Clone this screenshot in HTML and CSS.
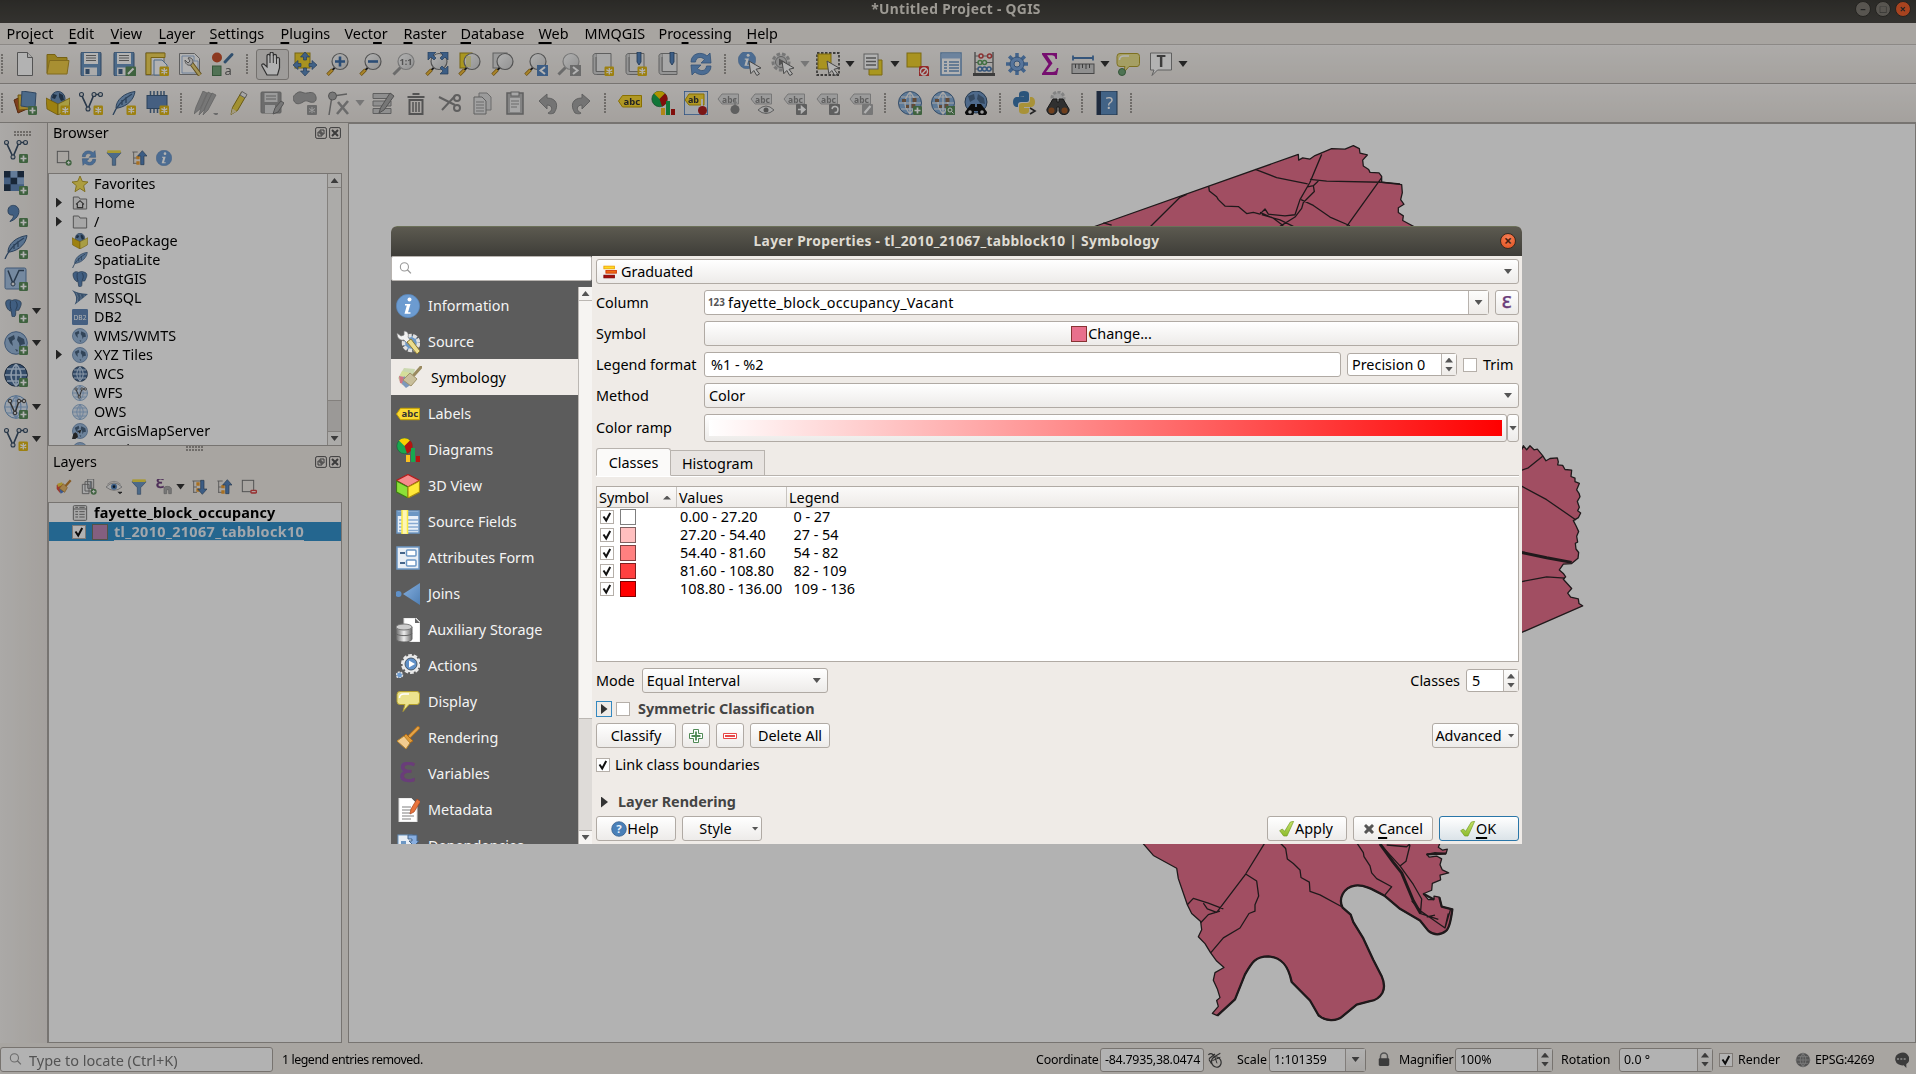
FILE: index.html
```html
<!DOCTYPE html>
<html lang="en">
<head>
<meta charset="utf-8">
<title>*Untitled Project - QGIS</title>
<link rel="stylesheet" href="styles.css">
</head>
<body>
<svg class="defs" width="0" height="0" aria-hidden="true">
<defs>
<linearGradient id="gBlue" x1="0" y1="0" x2="1" y2="1"><stop offset="0" stop-color="#86b0e0"/><stop offset="1" stop-color="#4f7fb4"/></linearGradient>
<linearGradient id="gGlass" x1="0" y1="0" x2="1" y2="1"><stop offset="0" stop-color="#fff"/><stop offset="1" stop-color="#cfcfcf"/></linearGradient>
<linearGradient id="gMetal"><stop offset="0" stop-color="#666"/><stop offset=".5" stop-color="#eee"/><stop offset="1" stop-color="#666"/></linearGradient>
<linearGradient id="gCheck" x1="0" y1="0" x2="0" y2="1"><stop offset="0" stop-color="#c5e36a"/><stop offset="1" stop-color="#8dbb2c"/></linearGradient>
</defs>
</svg>
<svg class="sprites" width="0" height="0" aria-hidden="true">
<symbol id="plus" viewBox="0 0 24 24"><rect x="15" y="15" width="9" height="9" rx="1.2" fill="#5a8c5a"/><path d="M19.5 16.5v6M16.500 19.500h6" stroke="#fff" stroke-width="1.700"/></symbol>
<symbol id="star" viewBox="0 0 24 24"><rect x="14.500" y="14.500" width="9.500" height="9.500" rx="1.200" fill="#e0b818"/><path d="M19.300 16v6.600M16.400 17.600l5.800 3.400M22.200 17.600l-5.800 3.400" stroke="#fff" stroke-width="1.300"/></symbol>
<symbol id="lens" viewBox="0 0 24 24"><path d="M3 21.500l7-7" stroke="#222" stroke-width="1.800"/><path d="M1.500 22.800l5-5" stroke="#94701c" stroke-width="3.400"/><path d="M1.800 22.500l4.500-4.500" stroke="#f2bd3c" stroke-width="2"/><circle cx="14" cy="9.500" r="8" fill="url(#gGlass)" stroke="#777" stroke-width="1.200"/></symbol>
<symbol id="lensg" viewBox="0 0 24 24"><path d="M1.500 22.500l7-7" stroke="#999" stroke-width="3"/><circle cx="14" cy="9.500" r="8" fill="url(#gGlass)" stroke="#aaa" stroke-width="1.200"/></symbol>
<symbol id="cursor" viewBox="0 0 24 24"><path d="M11 9l12 7-5 1.300 3.500 4.700-2.700 1.500-3-5-3 3.200z" fill="#fff" stroke="#666" stroke-width="1"/></symbol>
<symbol id="newdoc" viewBox="0 0 24 24"><path d="M4.500 .5h10l5 5v18h-15z" fill="#fff" stroke="#777"/><path d="M14.500 .5v5h5" fill="#eee" stroke="#777"/></symbol>
<symbol id="folder" viewBox="0 0 24 24"><path d="M1 21V2.500h8l2 3h10V9" fill="#d8b72c" stroke="#a88a1c"/><path d="M1 22L3.500 8.500H23L21 22z" fill="#f0cc48" stroke="#b8982a"/></symbol>
<symbol id="save" viewBox="0 0 24 24"><rect x="2" y="0" width="20" height="24" rx="1.500" fill="#6c97c4" stroke="#45658a"/><rect x="5" y="1" width="14" height="11" fill="#fff"/><path d="M7 3.500h10M7 6h10M7 8.500h10" stroke="#777"/><rect x="5" y="15.500" width="13" height="8" fill="#f4f4f4"/><rect x="6.500" y="17" width="4" height="5" fill="#45658a"/></symbol>
<symbol id="saveas" viewBox="0 0 24 24"><use href="#save"/><rect x="13.500" y="14.500" width="10.500" height="10" rx="1" fill="#5a8c5a"/><path d="M16 22l5.500-5.500" stroke="#fff" stroke-width="2"/></symbol>
<symbol id="layout" viewBox="0 0 24 24"><rect x="1" y="1" width="18" height="22" fill="#fff" stroke="#888"/><path d="M1 1h19v4.500H6v17H1z" fill="#f3d65a" stroke="#ab8d1c"/><path d="M9 8h8l5 5v10H9z" fill="#fff" stroke="#6b93c0"/><use href="#star"/></symbol>
<symbol id="layouts" viewBox="0 0 24 24"><path d="M1.500 1.500h15l5 5v16h-20z" fill="#fff" stroke="#888"/><path d="M4 4h12v5h4v12H4z" fill="none" stroke="#9bb8dc"/><path d="M13 11l9 12" stroke="#8c7026" stroke-width="4.500"/><path d="M13 11l9 12" stroke="#e9d37a" stroke-width="2.600"/><path d="M7 8c0 4 3 6 6 5l2-3c0-3-2-5-5-4l2 3-2 2z" fill="#e8e8e8" stroke="#777"/></symbol>
<symbol id="styles" viewBox="0 0 24 24"><circle cx="6" cy="5.500" r="5" fill="#c8502c"/><path d="M14 10l7-7.500" stroke="#45709c" stroke-width="3" stroke-linecap="round"/><rect x="1.500" y="14" width="8.500" height="9.500" fill="#74a37a" stroke="#4c7a52"/><text x="13.500" y="23" font-size="13" fill="#666">a</text></symbol>
<symbol id="hand" viewBox="0 0 24 24"><path d="M7 23L2 14c-1-2 1.500-3 2.500-1.300L7 15V4c0-2.300 3-2.300 3 0V2c0-2.400 3.300-2.400 3.300 0v2c0-2.300 3.200-2.300 3.200 0v3c0-2 3-2 3 0v9l-2 7z" fill="#fff" stroke="#444" stroke-width="1.200"/><path d="M10 4v7M13.300 4v7M16.500 6v6" stroke="#444"/></symbol>
<symbol id="panto" viewBox="0 0 24 24"><rect x="2" y="1" width="15" height="15" fill="#f2d22e" stroke="#a8901a"/><path d="M12 0l4.500 5h-3v3h-3V5h-3zM12 24l-4.500-5h3v-3h3v3h3zM0 13l5-4.500v3h3v3H5v3zM24 13l-5-4.500v3h-3v3h3v3z" fill="#5c8ac0" stroke="#35577f" stroke-width=".7"/></symbol>
<symbol id="zin" viewBox="0 0 24 24"><use href="#lens"/><path d="M14 4.500v10M9 9.500h10" stroke="#3e6ea8" stroke-width="2.600"/></symbol>
<symbol id="zout" viewBox="0 0 24 24"><use href="#lens"/><path d="M9 9.500h10" stroke="#3e6ea8" stroke-width="2.600"/></symbol>
<symbol id="znat" viewBox="0 0 24 24"><use href="#lensg"/><text x="14" y="13" font-size="9" font-weight="700" text-anchor="middle" fill="#777">1:1</text></symbol>
<symbol id="zfull" viewBox="0 0 24 24"><use href="#lens"/><path d="M3 0h8L8 3l3 3-2 2-3-3-3 3zM23 0v8l-3-3-3 3-2-2 3-3-3-3zM23 22h-8l3-3-3-3 2-2 3 3 3-3z" fill="#5585be" stroke="#35577f" stroke-width=".7"/></symbol>
<symbol id="zsel" viewBox="0 0 24 24"><rect x="2" y="1" width="12" height="15" fill="#f2d82e" stroke="#a8901a"/><use href="#lens"/><path d="M10.500 4v11" stroke="#e7dc5a" stroke-width="5" opacity=".5"/></symbol>
<symbol id="zlay" viewBox="0 0 24 24"><rect x="2" y="1" width="14" height="15" fill="#ddd" stroke="#888"/><use href="#lens"/></symbol>
<symbol id="zlast" viewBox="0 0 24 24"><use href="#lens"/><rect x="13" y="13" width="11" height="11" fill="#5585be"/><path d="M21 15l-4.500 3.500L21 22" fill="none" stroke="#fff" stroke-width="2"/></symbol>
<symbol id="znext" viewBox="0 0 24 24"><use href="#lensg"/><rect x="13" y="13" width="11" height="11" fill="#999"/><path d="M16 15l4.500 3.500L16 22" fill="none" stroke="#fff" stroke-width="2"/></symbol>
<symbol id="book" viewBox="0 0 24 24"><path d="M6 1.500h15v18H6z" fill="#eee" stroke="#888"/><path d="M6 1.500c-4 0-3 4-3 4v14c0 3 2 3 4 3h14v-3H6V5" fill="#d5d5d5" stroke="#888"/></symbol>
<symbol id="mapnew" viewBox="0 0 24 24"><use href="#book"/><use href="#star"/></symbol>
<symbol id="mark" viewBox="0 0 24 24"><use href="#book"/><path d="M14 0h4v10l-2 3-2-3z" fill="#5585be" stroke="#2c4c72" stroke-width=".8"/></symbol>
<symbol id="marknew" viewBox="0 0 24 24"><use href="#mark"/><use href="#star"/></symbol>
<symbol id="refresh" viewBox="0 0 24 24"><path d="M2 10C2 1 13-1 18 4l3-3 1 10h-10l3.500-3.500C12 4 7 5 6.500 10z" fill="#6b9bd2" stroke="#4a75a8" stroke-width=".8"/><path d="M22 14c0 9-11 11-16 6l-3 3-1-10h10l-3.500 3.500C12 20 17 19 17.500 14z" fill="#6b9bd2" stroke="#4a75a8" stroke-width=".8"/></symbol>
<symbol id="info" viewBox="0 0 24 24"><circle cx="12" cy="12" r="11.700" fill="#6c9bd0" stroke="#547fb2" stroke-width=".6"/><circle cx="13.500" cy="5.500" r="2" fill="#fff"/><path d="M9 10h5.500l-2.500 8.300h2.500v1.500H8.500l2.300-8.300H9z" fill="#fff"/></symbol>
<symbol id="ident" viewBox="0 0 24 24"><svg x="0" y="-1" width="18" height="18"><use href="#info"/></svg><use href="#cursor"/></symbol>
<symbol id="gearg" viewBox="0 0 24 24"><circle cx="10" cy="10" r="8" fill="#ddd" stroke="#aaa" stroke-width="3" stroke-dasharray="3.500 2"/><circle cx="10" cy="10" r="5.500" fill="#ccc" stroke="#888"/><path d="M8 6.500l6 3.500-6 3.500z" fill="#777"/><use href="#cursor"/></symbol>
<symbol id="select" viewBox="0 0 24 24"><rect x="1" y="1" width="22" height="22" fill="none" stroke="#222" stroke-width="1.300" stroke-dasharray="2.500 1.500"/><rect x="2" y="2" width="13" height="15" fill="#f2d22e" stroke="#b09618"/><use href="#cursor"/></symbol>
<symbol id="selform" viewBox="0 0 24 24"><path d="M8 8h13v15H8z" fill="#f2d82e" stroke="#b09618"/><rect x="3" y="2" width="14" height="15" fill="#fff" stroke="#888"/><path d="M5 6h10M5 9.500h10M5 13h10" stroke="#777" stroke-width="1.300"/></symbol>
<symbol id="desel" viewBox="0 0 24 24"><rect x="1" y="1" width="14" height="14" fill="#f2d22e" stroke="#b09618"/><rect x="13" y="14" width="10" height="11" rx="1.500" fill="#d23a3a"/><circle cx="18" cy="19.500" r="3.500" fill="#d23a3a" stroke="#fff" stroke-width="1.400"/><path d="M16 22l4.500-5" stroke="#fff" stroke-width="1.400"/></symbol>
<symbol id="table" viewBox="0 0 24 24"><rect x="2" y="1" width="20" height="22" fill="#fff" stroke="#6c97c4" stroke-width="1.500"/><path d="M2.500 4h19" stroke="#9abbe2" stroke-width="5"/><path d="M5 10h3M5 13h3M5 16h3M5 19h3M10 10h10M10 13h10M10 16h10M10 19h10" stroke="#6c97c4" stroke-width="1.300"/></symbol>
<symbol id="abacus" viewBox="0 0 24 24"><path d="M3 0v22M21 0v22" stroke="#777" stroke-width="1.500"/><path d="M1 22.500h22" stroke="#555" stroke-width="3"/><path d="M3 4h18M3 10.500h18M3 17h18" stroke="#777"/><g fill="#eee" stroke-width="1.500"><g stroke="#c84848"><circle cx="9" cy="4" r="2"/><circle cx="17.500" cy="4" r="2"/></g><g stroke="#5fa05f"><circle cx="8" cy="10.500" r="2"/><circle cx="12.500" cy="10.500" r="2"/></g><g stroke="#4c7ab0"><circle cx="8" cy="17" r="2"/><circle cx="12.500" cy="17" r="2"/><circle cx="17" cy="17" r="2"/></g></g></symbol>
<symbol id="gear" viewBox="0 0 24 24"><path d="M12 1v22M1 12h22M4.200 4.200l15.600 15.600M19.800 4.200L4.200 19.800" stroke="#5e8dc6" stroke-width="3.500"/><circle cx="12" cy="12" r="7" fill="#7ba6dc" stroke="#4a75a8"/><circle cx="12" cy="12" r="3" fill="#f0ebe6" stroke="#4a75a8"/></symbol>
<symbol id="sigma" viewBox="0 0 24 24"><path d="M4 1h15v6h-1.500C17 4 16 3.300 13 3.300H9l5.500 8L8 20h6c3 0 4-1 5-4h1.500L19 23H4v-1.500L10.500 12 4 2.500z" fill="#a8149e"/></symbol>
<symbol id="ruler" viewBox="0 0 24 24"><path d="M2 6h20M2 3.500v5M22 3.500v5" stroke="#4c7ab0" stroke-width="1.800"/><rect x="1" y="12" width="22" height="9.500" fill="#ccc" stroke="#666"/><path d="M4.500 12v4M8 12v5M11.500 12v4M15 12v5M18.500 12v4" stroke="#555"/></symbol>
<symbol id="tip" viewBox="0 0 24 24"><path d="M4 1.500h17q2.500 0 2.500 3v7q0 3-2.500 3h-8l-6 7 2-7H4q-3 0-3-3v-7q0-3 3-3z" fill="#ece38e" stroke="#b3a02e"/><path d="M3.500 8Q3.500 4 8 4h5" stroke="#fff" stroke-width="1.500" fill="none"/></symbol>
<symbol id="tipm" viewBox="0 0 24 24"><use href="#tip"/><circle cx="6" cy="20" r="3.500" fill="#6fa476" stroke="#4c7a52"/></symbol>
<symbol id="textan" viewBox="0 0 24 24"><path d="M1.500 1h21v17H8.500L3 23.500l2-5.500H1.500z" fill="#fff" stroke="#888"/><text x="12" y="15" font-family="Liberation Serif,serif" font-weight="700" font-size="16" text-anchor="middle" fill="#555">T</text></symbol>
<symbol id="dsm" viewBox="0 0 24 24"><path d="M1 9l9-4 4 13-9 4z" fill="#b55a28" stroke="#7c3a14"/><path d="M5 4l12 0 1 14-12 1z" fill="#e8c040" stroke="#9a7818"/><path d="M9 0l14 2-1 15-14-2z" fill="#6c97c4" stroke="#45658a"/><use href="#plus"/></symbol>
<symbol id="gpkg" viewBox="0 0 24 24"><circle cx="12" cy="7.500" r="7" fill="#6f94bd" stroke="#3f5e82"/><path d="M7 3l4 1-2 4-3-1zM13 2l4 2 1 5-3 1-2-4z" fill="#2c4460"/><path d="M0 7l12 6v11L1 18z" fill="#e0b818" stroke="#9a7c10" stroke-width=".8"/><path d="M24 7l-12 6v11l11-6z" fill="#f0e060" stroke="#9a7c10" stroke-width=".8"/></symbol>
<symbol id="gpkgn" viewBox="0 0 24 24"><use href="#gpkg"/><use href="#star"/></symbol>
<symbol id="vect" viewBox="0 0 24 24"><path d="M2.500 4l6.500 14L15 3.500h6" fill="none" stroke="#3a5068" stroke-width="1.700"/><g fill="#ddd" stroke="#3a5068" stroke-width="1.100"><circle cx="2.500" cy="3.500" r="2"/><circle cx="9" cy="18" r="2"/><circle cx="15" cy="3.500" r="2"/><circle cx="21.500" cy="3.500" r="2"/></g></symbol>
<symbol id="vectn" viewBox="0 0 24 24"><use href="#vect"/><use href="#star"/></symbol>
<symbol id="vectp" viewBox="0 0 24 24"><use href="#vect"/><use href="#plus"/></symbol>
<symbol id="feather" viewBox="0 0 24 24"><path d="M4 17C4 9 12 2 23 .5 22 8 16 15 6 17z" fill="#7ea3cc" stroke="#3f5e82"/><path d="M1 24C4 16 10 9 20 3M10 9v5M14 6v6" fill="none" stroke="#3f5e82" stroke-width="1.300"/></symbol>
<symbol id="feathn" viewBox="0 0 24 24"><use href="#feather"/><use href="#star"/></symbol>
<symbol id="feathp" viewBox="0 0 24 24"><use href="#feather"/><use href="#plus"/></symbol>
<symbol id="chip" viewBox="0 0 24 24"><path d="M5.500 0v22M9 0v22M12.500 0v22M16 0v22M19 0v22" stroke="#4c6c90" stroke-width="1.500"/><rect x="2" y="4.500" width="20" height="13" fill="#6288b8" stroke="#3f5e82"/><use href="#star"/></symbol>
<symbol id="pens" viewBox="0 0 24 24"><g fill="#aaa" stroke="#888" stroke-width=".7"><path d="M0 23l2-7L9 0l4 2-7 16z"/><path d="M5 24l2-7L14 1l4 2-8 16z"/><path d="M9 24l2-7L18 2l4 2-8 15z"/></g><path d="M19 22h6l-3 3z" fill="#999"/></symbol>
<symbol id="pen" viewBox="0 0 24 24"><path d="M4 23.500l1.500-7L14.500 1l5 3-9 15.500z" fill="#e8cf48" stroke="#94801c"/><path d="M13 4l5 3 2-3.500-5-3z" fill="#eee" stroke="#888"/><path d="M4 23.500l1.500-6 4 3z" fill="#e8dcb8"/></symbol>
<symbol id="saveg" viewBox="0 0 24 24"><rect x="1" y="1" width="20" height="21" rx="1" fill="#9a9a9a" stroke="#888"/><rect x="4.500" y="2" width="13" height="9" fill="#ddd"/><path d="M6 5h10M6 8h10" stroke="#888"/><rect x="5" y="14" width="10" height="8" fill="#ddd"/><path d="M13 23l2-6L21 10l3 2-6 9z" fill="#aaa" stroke="#777"/></symbol>
<symbol id="blob" viewBox="0 0 24 24"><path d="M4 2c4-3 6 1 10 0s8-1 9 4-3 6-6 5-4-2-7 0-7 3-9-1 0-6 3-8z" fill="#a5a5a5" stroke="#888"/><rect x="14" y="14" width="10" height="10" rx="1" fill="#999"/><path d="M19 16v6M16 17.500l6 3.500M22 17.500l-6 3.500" stroke="#ddd"/></symbol>
<symbol id="vtool" viewBox="0 0 24 24"><path d="M6 5L3 24M7 5l14-2" stroke="#888" stroke-width="1.500"/><circle cx="6.500" cy="5" r="4" fill="#aaa" stroke="#777"/><path d="M12 11l10 12M22 10L11 23" stroke="#999" stroke-width="2.600"/></symbol>
<symbol id="multi" viewBox="0 0 24 24"><path d="M2 2.500h18v5H2zM2 10h18v5H2zM2 17.500h18v5H2z" fill="#ccc" stroke="#888"/><path d="M8 22l1.500-5L19 2l4 3-10 14z" fill="#aaa" stroke="#777"/></symbol>
<symbol id="trash" viewBox="0 0 24 24"><path d="M3.500 6h17M8.500 3h7" stroke="#777" stroke-width="2.200"/><path d="M5.500 9h13v14h-13z" fill="none" stroke="#777" stroke-width="2"/><path d="M9 11v10M12 11v10M15 11v10" stroke="#777" stroke-width="1.500"/></symbol>
<symbol id="cut" viewBox="0 0 24 24"><path d="M2 6l16 8M5 19L18 5" stroke="#888" stroke-width="2"/><circle cx="20" cy="7" r="3" fill="none" stroke="#888" stroke-width="2"/><circle cx="20" cy="17" r="3" fill="none" stroke="#888" stroke-width="2"/></symbol>
<symbol id="copy" viewBox="0 0 24 24"><path d="M9 2h8l4 4v13H9z" fill="#ddd" stroke="#999"/><path d="M4 6h8l4 4v13H4z" fill="#e8e8e8" stroke="#888"/><path d="M6 11h8M6 14h8M6 17h8M6 20h8" stroke="#999"/></symbol>
<symbol id="paste" viewBox="0 0 24 24"><rect x="4" y="2" width="16" height="21" fill="#bbb" stroke="#888" stroke-width="1.500"/><rect x="8" y="1" width="8" height="4" fill="#eee" stroke="#888"/><path d="M7 7h10v14H7z" fill="#eee"/><path d="M8 10h8M8 13h8M8 16h6" stroke="#999"/></symbol>
<symbol id="undo" viewBox="0 0 24 24"><path d="M3 10l8-7v4c10 0 12 8 7 15-2 1-6 1-6 0 5-2 5-8-1-8v4z" fill="#a5a5a5" stroke="#8a8a8a"/></symbol>
<symbol id="redo" viewBox="0 0 24 24"><path d="M21 10l-8-7v4C3 7 1 15 6 22c2 1 6 1 6 0-5-2-5-8 1-8v4z" fill="#a5a5a5" stroke="#8a8a8a"/></symbol>
<symbol id="abc" viewBox="0 0 24 24"><path d="M.5 10l4-5.500h19v11.500h-19z" fill="#fbd933" stroke="#c3a000"/><text x="13.800" y="13.500" font-size="9.500" font-weight="700" text-anchor="middle" fill="#333">abc</text></symbol>
<symbol id="abcl" viewBox="0 0 24 24"><path d="M.5 12l4-5.700h19v11.400h-19z" fill="#fbd933" stroke="#c3a000"/><text x="13.800" y="15.300" font-size="9.500" font-weight="700" text-anchor="middle" fill="#333">abc</text></symbol>
<symbol id="abcg" viewBox="0 0 24 24"><path d="M1 8l4-5h16.500v10H5z" fill="#ddd" stroke="#aaa"/><text x="12.500" y="11.500" font-size="8.500" font-weight="700" text-anchor="middle" fill="#888">abc</text></symbol>
<symbol id="diag" viewBox="0 0 24 24"><circle cx="8.500" cy="8" r="7.700" fill="#18a850" stroke="#1c5c34" stroke-width=".6"/><path d="M8.500 8L3 2.500A7.700 7.700 0 0 1 14 2.500z" fill="#fcd000"/><path d="M8.500 8L14 2.500a7.700 7.700 0 0 1-3 13z" fill="#b81410"/><path d="M10 17h4v7h-4z" fill="#fcc020"/><path d="M15 10h4v14h-4z" fill="#18a850"/><path d="M20 18h4v6h-4z" fill="#b81410"/></symbol>
<symbol id="pinl" viewBox="0 0 24 24"><rect x="0" y="0" width="24" height="24" fill="#e9eef4" stroke="#3c72b8" stroke-width="1.500"/><path d="M1 9l4-6h15v11H5z" fill="#fbd933" stroke="#c3a000"/><text x="9.500" y="12" font-size="9" font-weight="700" text-anchor="middle" fill="#333">ab</text><path d="M18 8v9" stroke="#eee" stroke-width="2"/><circle cx="18.500" cy="19.500" r="4.500" fill="#b02020"/></symbol>
<symbol id="ping" viewBox="0 0 24 24"><use href="#abcg"/><path d="M18 8v9" stroke="#aaa" stroke-width="2"/><circle cx="18" cy="18.500" r="4.500" fill="#888"/></symbol>
<symbol id="eyeg" viewBox="0 0 24 24"><use href="#abcg"/><path d="M8 19q8-8 16 0-8 7-16 0z" fill="#eee" stroke="#888"/><circle cx="16" cy="19" r="2.500" fill="#777"/></symbol>
<symbol id="movg" viewBox="0 0 24 24"><use href="#abcg"/><rect x="13" y="13" width="11" height="11" rx="1" fill="#888"/><path d="M15 18.500h4M18.500 15.500l3.500 3-3.500 3z" stroke="#fff" stroke-width="1.500" fill="#fff"/></symbol>
<symbol id="rotg" viewBox="0 0 24 24"><use href="#abcg"/><rect x="13" y="13" width="11" height="11" rx="1" fill="#888"/><path d="M16 18a3 3 0 1 1 2.500 3.500" stroke="#fff" stroke-width="1.500" fill="none"/></symbol>
<symbol id="edg" viewBox="0 0 24 24"><use href="#abcg"/><rect x="13" y="13" width="11" height="11" rx="1" fill="#aaa"/><path d="M15.500 22l6-7" stroke="#fff" stroke-width="2.200"/></symbol>
<symbol id="grid" viewBox="0 0 24 24"><circle cx="12" cy="12" r="11.500" fill="#86aed8" stroke="#4a6d94"/><path d="M1 12h22M3 6h18M3 18h18M12 1v22M12 1Q2 12 12 23Q22 12 12 1" fill="none" stroke="#eee" stroke-width="1.200"/><path d="M4 8h4v3H4zM14.500 7h4v4h-4zM13.500 13h4v4h-4zM8 14h3v3H8z" fill="#8a6a50"/></symbol>
<symbol id="gridp" viewBox="0 0 24 24"><use href="#grid"/><use href="#plus"/></symbol>
<symbol id="grids" viewBox="0 0 24 24"><use href="#grid"/><rect x="15" y="15" width="9" height="9" fill="#5a8c5a"/><circle cx="19" cy="19" r="2" fill="none" stroke="#fff"/><path d="M20.500 20.500l2 2" stroke="#fff"/></symbol>
<symbol id="bino" viewBox="0 0 24 24"><path d="M7 3h4v4h2V3h4l6 14a5 5 0 0 1-10 3v-5h-2v5A5 5 0 0 1 1 17z" fill="#444" stroke="#222"/><circle cx="6" cy="18.500" r="3.500" fill="#a05a28"/><circle cx="18" cy="18.500" r="3.500" fill="#a05a28"/></symbol>
<symbol id="binog" viewBox="0 0 24 24"><circle cx="12" cy="7" r="6" fill="#ddd" stroke="#bbb" stroke-width="3" stroke-dasharray="3 1.500"/><path d="M7 8h4v3h2V8h4l6 10a5 4.500 0 0 1-10 2v-4h-2v4a5 4.500 0 0 1-10-2z" fill="#444" stroke="#222"/><circle cx="5.500" cy="19.500" r="3" fill="#a05a28"/><circle cx="18.500" cy="19.500" r="3" fill="#a05a28"/></symbol>
<symbol id="meta" viewBox="0 0 24 24"><circle cx="12" cy="11" r="11" fill="#7198c6" stroke="#34506e"/><path d="M4 5l6-2 1 5-5 3zM14 3l6 4 1 6-5-1-3-4z" fill="#4a6788"/><path d="M7 13h4v3h2v-3h4l6 8a4 3 0 0 1-9 1v-2h-4v2a4 3 0 0 1-9-1z" fill="#111"/><circle cx="6" cy="21" r="1.800" fill="#ddd"/><circle cx="18" cy="21" r="1.800" fill="#ddd"/></symbol>
<symbol id="python" viewBox="0 0 24 24"><path d="M6 6V3q0-3 5-3t5 3v6q0 2-2 2H8q-3 0-3 3v2H3q-3-1-3-5t3-5h8V5.500z" fill="#3c78b0"/><path d="M17 6h2q3 1 3 5t-3 5h-8v1h5v3q0 3-5 3t-5-3v-5q0-3 3-3h5q3 0 3-3z" fill="#f0d050"/><path d="M17 17l5 3-5 3" fill="none" stroke="#333" stroke-width="1.600"/></symbol>
<symbol id="help" viewBox="0 0 24 24"><rect x="2" y="0" width="20" height="24" fill="#5f8dc0" stroke="#2c4460"/><path d="M2 0h4v24H2z" fill="#2c3e58"/><text x="14.500" y="18" font-size="17" text-anchor="middle" fill="#fff">?</text></symbol>
<symbol id="raster" viewBox="0 0 24 24"><path d="M0 0h20v20H0z" fill="#6288b8"/><path d="M0 0h6.600v6.600H0zM13.300 0H20v6.600h-6.700zM6.600 6.600h6.700v6.700H6.600zM0 13.300h6.600V20H0z" fill="#22364e"/><path d="M6.600 0h6.700v6.600H6.600zM13.300 6.600H20v6.700h-6.700z" fill="#8fb1da"/><use href="#plus"/></symbol>
<symbol id="comma" viewBox="0 0 24 24"><path d="M4 8C4 3 8 2 10.500 2.500 17 4 17 15 6 18.500 9 15 10 14 9 12 6 12.500 4 11 4 8z" fill="#5c86b8" stroke="#3f5e82"/><use href="#plus"/></symbol>
<symbol id="virt" viewBox="0 0 24 24"><rect x="1" y="1" width="21" height="21" rx="1.500" fill="#a7c3e4" stroke="#5c7fa8"/><path d="M4 3.500l5 13L15 3.500h5" fill="none" stroke="#3a5068" stroke-width="1.500"/><circle cx="9" cy="17" r="2" fill="#eee" stroke="#3a5068"/><use href="#plus"/></symbol>
<symbol id="pg" viewBox="0 0 24 24"><path d="M2 3c3-3 6-2 8-1 3-2 8-1 11 1 3 3 0 8-2 12l-4 0c0 4 0 7-1 8s-4 1-4 0l-1-7C5 17 0 8 2 3z" fill="#5c86b8" stroke="#34506e"/><path d="M8 3c-1 5 0 9 1 12M15 3c3 4 2 8 0 11" fill="none" stroke="#2c4460"/></symbol>
<symbol id="pgp" viewBox="0 0 24 24"><svg width="19" height="18"><use href="#pg"/></svg><use href="#plus"/></symbol>
<symbol id="globe" viewBox="0 0 24 24"><circle cx="12" cy="12" r="11.300" fill="#9bb9dc" stroke="#5a7da6"/><path d="M4 7l6-3 1 4-3 2 1 5-3-3zM14 5l6 3 1 5-4 1-1 3-1-5-2-3zM11 18l3 1-1 2z" fill="#48637f"/></symbol>
<symbol id="globep" viewBox="0 0 24 24"><use href="#globe"/><use href="#plus"/></symbol>
<symbol id="arc" viewBox="0 0 24 24"><use href="#globe"/><path d="M0 24l2-8 3-2 3 2 1 5-4 3zM8 12l6-2-2 6z" fill="#333"/></symbol>
<symbol id="wcs" viewBox="0 0 24 24"><circle cx="12" cy="12" r="11.300" fill="#4a6c96" stroke="#22364e"/><path d="M1 12h22M3 6h18M3 18h18M12 1v22M12 1Q2 12 12 23Q22 12 12 1" fill="none" stroke="#c8dcf2" stroke-width="1.500"/></symbol>
<symbol id="wcsp" viewBox="0 0 24 24"><use href="#wcs"/><use href="#plus"/></symbol>
<symbol id="ows" viewBox="0 0 24 24"><circle cx="12" cy="12" r="11.300" fill="#dde8f4" stroke="#6c97c4"/><path d="M1 12h22M3 6h18M3 18h18M12 1v22M12 1Q2 12 12 23Q22 12 12 1" fill="none" stroke="#8fb1da" stroke-width="1.200"/></symbol>
<symbol id="wfs" viewBox="0 0 24 24"><use href="#ows"/><path d="M6 7l5 11L15 6h5" fill="none" stroke="#444" stroke-width="1.500"/><g fill="#ddd" stroke="#444"><circle cx="6" cy="6" r="1.800"/><circle cx="11" cy="18" r="1.800"/><circle cx="15" cy="6" r="1.800"/><circle cx="20" cy="6" r="1.800"/></g></symbol>
<symbol id="wfsp" viewBox="0 0 24 24"><use href="#wfs"/><use href="#plus"/></symbol>
<symbol id="fav" viewBox="0 0 24 24"><path d="M12 0l3.500 8 8.500 1-6.500 5.500 2 9-7.500-4.700-7.500 4.700 2-9L0 9l8.500-1z" fill="#f6e05a" stroke="#ae9620" stroke-width="1.300"/></symbol>
<symbol id="dir" viewBox="0 0 24 24"><path d="M2 21V3h8l2 3h10v15z" fill="#eee" stroke="#777" stroke-width="1.500"/></symbol>
<symbol id="home" viewBox="0 0 24 24"><use href="#dir"/><path d="M6 14l6-5.500 6 5.500M8 13v6h8v-6" fill="none" stroke="#444" stroke-width="1.700"/></symbol>
<symbol id="mssql" viewBox="0 0 24 24"><path d="M0 0q8 5 24 6-7 6-20 16 6-12-4-22z" fill="#4f7299"/><path d="M6 4q5 7 2 14M12 6q3 5 1 9M18 7q1 3 0 4" stroke="#a0bada" fill="none"/></symbol>
<symbol id="db2" viewBox="0 0 24 24"><rect x="0" y="0" width="24" height="24" rx="2" fill="#6288b8"/><text x="12" y="16" font-size="10" text-anchor="middle" fill="#fff">DB2</text></symbol>
<symbol id="addsq" viewBox="0 0 24 24"><rect x="2" y="2" width="17" height="17" fill="none" stroke="#777" stroke-width="1.500"/><circle cx="19" cy="19" r="4.500" fill="#5a8c5a"/><path d="M19 16.500v5M16.500 19h5" stroke="#fff" stroke-width="1.500"/></symbol>
<symbol id="filter" viewBox="0 0 24 24"><path d="M2 3h20v2l-7.500 8v10h-5V13L2 5z" fill="#6c97c4" stroke="#45658a"/><path d="M2 2.500h20" stroke="#f0dc48" stroke-width="4"/></symbol>
<symbol id="collapse" viewBox="0 0 24 24"><path d="M2 3h8M4 3v18M4 12h5M4 20h5" stroke="#777" stroke-width="1.300"/><path d="M8 9h5v5H8zM8 17h5v5H8z" fill="#f0a030"/><path d="M17 1l7 8h-4.500v13h-5V9H10z" fill="#5585be" stroke="#34506e"/></symbol>
<symbol id="expand" viewBox="0 0 24 24"><path d="M2 3h14M4 3v18M4 12h5M4 20h5" stroke="#777" stroke-width="1.300"/><path d="M8 5h5v5H8zM8 14h5v5H8z" fill="#f0a030"/><path d="M17 23l7-8h-4.500V2h-5v13H10z" fill="#5585be" stroke="#34506e"/></symbol>
<symbol id="brush" viewBox="0 0 24 24"><path d="M6 2l11 1-3 12-10 4-4-7z" fill="#cbd8b0"/><path d="M4 5l8 2-3 4-7-1z" fill="#d5df9a"/><path d="M1 10l5 1 3 8-7-2z" fill="#cf7484"/><path d="M6 10l8 8-6 4-4-4z" fill="#7c98bc"/><path d="M16 9l7-8" stroke="#9a8a60" stroke-width="3" stroke-linecap="round"/><path d="M12 7l7 6-6 7-8-6z" fill="#c9bf9c" stroke="#a0926a"/></symbol>
<symbol id="brushs" viewBox="0 0 24 24"><path d="M1 9l7-3 4 9-6 6-5-6z" fill="#e05040"/><path d="M2 7l7-2 2 4-8 3z" fill="#f0d040"/><path d="M5 15l6-2 1 6-5 3z" fill="#5080d0"/><path d="M13 12l9-10" stroke="#c08030" stroke-width="3.500"/><path d="M11 7l6 6-4 7-8-6z" fill="#e8b868" stroke="#b07a30"/></symbol>
<symbol id="group" viewBox="0 0 24 24"><path d="M2 8h10v14H2zM6 4h10v14H6zM10 0h9v14h-9z" fill="#eee" stroke="#777" stroke-width="1.300"/><path d="M14 4v10" stroke="#456"/><circle cx="19" cy="19" r="4.500" fill="#5a8c5a"/><path d="M19 16.500v5M16.500 19h5" stroke="#fff" stroke-width="1.500"/></symbol>
<symbol id="eye" viewBox="0 0 24 24"><path d="M0 12Q12 0 24 12Q12 22 0 12z" fill="#eee" stroke="#999" stroke-width="1.300"/><path d="M2 8Q12-1 22 8" stroke="#999" fill="none"/><circle cx="12" cy="11.500" r="4.500" fill="#5585be"/><circle cx="12" cy="11.500" r="2" fill="#123"/><path d="M17 19h8l-4 4z" fill="#333"/></symbol>
<symbol id="eps" viewBox="0 0 24 24"><text x="11.500" y="20" font-family="Liberation Serif,serif" font-size="36" text-anchor="middle" fill="#6a3d7a" stroke="#6a3d7a" stroke-width=".6">ε</text></symbol>
<symbol id="epsf" viewBox="0 0 24 24"><text x="6" y="13" font-family="Liberation Serif,serif" font-size="27" text-anchor="middle" fill="#6a3d7a" stroke="#6a3d7a" stroke-width=".6">ε</text><path d="M12 14q0-3 5-3t6 3v8h-4v-6h-3v6h-4z" fill="#aaa" stroke="#888"/></symbol>
<symbol id="remsq" viewBox="0 0 24 24"><rect x="2" y="2" width="17" height="17" fill="none" stroke="#777" stroke-width="1.500"/><rect x="14" y="16" width="10" height="6" rx="2" fill="#d84848"/><path d="M16 19h6" stroke="#fff" stroke-width="1.500"/></symbol>
<symbol id="tbl" viewBox="0 0 24 24"><rect x="2" y="1" width="20" height="22" rx="1.500" fill="#eee" stroke="#777" stroke-width="1.500"/><path d="M2 6h20M5 10h4M11 10h8M5 14h4M11 14h8M5 18h4M11 18h8M5 3.500h4M11 3.500h8" stroke="#777" stroke-width="1.500"/></symbol>
<symbol id="chk" viewBox="0 0 14 14"><rect x=".5" y=".5" width="13" height="13" fill="#fff" stroke="#b5afa9"/><path d="M3.500 6.500L6.200 10.500 10.200 3" fill="none" stroke="#111" stroke-width="2"/></symbol>
<symbol id="unchk" viewBox="0 0 14 14"><rect x=".5" y=".5" width="13" height="13" fill="#fff" stroke="#b5afa9"/></symbol>
<symbol id="mag" viewBox="0 0 24 24"><circle cx="10" cy="9" r="7.500" fill="none" stroke="#999" stroke-width="2"/><path d="M15 14l7 7" stroke="#999" stroke-width="2.500"/></symbol>
<symbol id="src" viewBox="0 0 24 24"><circle cx="15" cy="13" r="7.500" fill="#6c97c4" stroke="#e0e0e0" stroke-width="3.500" stroke-dasharray="4 1.300"/><path d="M1 3l4 3 3-1V1c4 0 5 4 4 6l3 4-3 3-4-4C4 11 1 8 1 3z" fill="#f2f2f2" stroke="#777" stroke-width=".7"/><path d="M11 12l4-3 9 12-3 3z" fill="#ebdc8c" stroke="#8c7a34"/></symbol>
<symbol id="cube" viewBox="0 0 24 24"><path d="M12 .5l11.500 6L12 13 .5 6.500z" fill="#f78c8c" stroke="#b81c1c" stroke-width="1.200"/><path d="M.5 7L12 13v11L.5 18z" fill="#8ce038" stroke="#3c7c14" stroke-width="1.200"/><path d="M23.500 7L12 13v11l11.500-6z" fill="#ffe838" stroke="#a88c10" stroke-width="1.200"/></symbol>
<symbol id="fields" viewBox="0 0 24 24"><rect x="1" y="1" width="22" height="22" fill="#e9f0f8" stroke="#6c97c4" stroke-width="1.500"/><path d="M1 4h22" stroke="#6c97c4" stroke-width="4"/><path d="M3 10h20M3 13.500h20M3 17h20M3 20.500h20" stroke="#88aad2" stroke-width="1.300"/><rect x="6" y="-.5" width="5.500" height="25" fill="#fdf6b8" stroke="#fae940" stroke-width="1.500"/></symbol>
<symbol id="attr" viewBox="0 0 24 24"><rect x="1" y="1" width="22" height="22" fill="#e8eef5" stroke="#6c97c4" stroke-width="1.500"/><rect x="10.500" y="4" width="9.500" height="6" rx="1" fill="#fff" stroke="#6c97c4" stroke-width="1.500"/><rect x="10.500" y="14" width="9.500" height="6" rx="1" fill="#fff" stroke="#6c97c4" stroke-width="1.500"/><path d="M4 7h5M4 17h5" stroke="#45658a" stroke-width="2"/></symbol>
<symbol id="join" viewBox="0 0 24 24"><circle cx="2.500" cy="12" r="3" fill="#5f90c8"/><path d="M7 12L24 1v22z" fill="url(#gBlue)"/></symbol>
<symbol id="aux" viewBox="0 0 24 24"><path d="M8 0h12l4 4v20H8z" fill="#fff" stroke="#ddd"/><path d="M19 0v5h5" fill="#666"/><path d="M0 9v12c0 4 16 4 16 0V9z" fill="url(#gMetal)" stroke="#666"/><ellipse cx="8" cy="9" rx="8" ry="3" fill="#ccc" stroke="#777"/><path d="M0 15c0 3.500 16 3.500 16 0" fill="none" stroke="#666"/></symbol>
<symbol id="acts" viewBox="0 0 24 24"><circle cx="15" cy="10" r="8.500" fill="#eee" stroke="#e8e8e8" stroke-width="3" stroke-dasharray="3.500 1.800"/><circle cx="15" cy="10" r="6" fill="#5f90c8" stroke="#456"/><path d="M13 6.500l6 3.500-6 3.500z" fill="#fff"/><circle cx="3.500" cy="21" r="3" fill="#6c9bd0" stroke="#ddd" stroke-width="1.500" stroke-dasharray="2 1"/></symbol>
<symbol id="rend" viewBox="0 0 24 24"><path d="M13 11L22 2" stroke="#b8731c" stroke-width="3.800" stroke-linecap="round"/><path d="M13 11L22 2" stroke="#e5a548" stroke-width="2" stroke-linecap="round"/><path d="M10 8l7 7-5 3-6-6z" fill="#e09a38" stroke="#a8691c"/><path d="M8 10l6 7-4 6L1 15z" fill="#f2cc90" stroke="#b8842c"/></symbol>
<symbol id="metad" viewBox="0 0 24 24"><path d="M3 0h12l6 6v18H3z" fill="#fff" stroke="#ddd"/><path d="M6 9h9M6 12h10M6 15h8M6 18h12M6 21h9" stroke="#aaa" stroke-width="1.300"/><path d="M14 16l1-5 6-10 3.500 2.500L18 14z" fill="#e8743c" stroke="#a8441c" stroke-width=".7"/></symbol>
<symbol id="deps" viewBox="0 0 24 24"><rect x="2" y="1" width="14" height="16" fill="#e8eef5" stroke="#6c97c4"/><path d="M5 7h5v4H5z" fill="#6c97c4"/><path d="M12 1h9v6h2l-5 5-5-5h3V5h-4z" fill="#88aee0" stroke="#45658a"/></symbol>
<symbol id="grad" viewBox="0 0 24 24"><rect x="1.500" y="2" width="18" height="4.500" fill="#fcdc20" stroke="#f0a000" stroke-width="1.500"/><rect x="5" y="9.500" width="18" height="4.500" fill="#f06a10" stroke="#d03808" stroke-width="1.500"/><rect x="1.500" y="17.500" width="18" height="4.500" fill="#a80c08" stroke="#780000" stroke-width="1.500"/></symbol>
<symbol id="helpc" viewBox="0 0 24 24"><circle cx="12" cy="12" r="11" fill="#4a80b8" stroke="#2c5484"/><text x="12" y="18" font-size="17" font-weight="700" text-anchor="middle" fill="#e8f0fa">?</text></symbol>
<symbol id="okc" viewBox="0 0 24 24"><path d="M1 14.500l4-2.500 3.500 3.500L17 1.500l5-1L12 22.500H7z" fill="url(#gCheck)" stroke="#6f9820"/></symbol>
<symbol id="xc" viewBox="0 0 24 24"><path d="M2 6l4-4 6 5.500L18 2l4 4-5.500 6 5.500 6-4 4-6-5.500L6 22l-4-4 5.500-6z" fill="#555"/></symbol>
<symbol id="plusg" viewBox="0 0 16 16"><path d="M5.500 1.500h5v4h4v5h-4v4h-5v-4h-4v-5h4z" fill="#fff" stroke="#4f8a55"/><path d="M8 3.500v9M3.500 8h9" stroke="#4f8a55" stroke-width="1.800"/></symbol>
<symbol id="minusr" viewBox="0 0 16 16"><path d="M1.500 5.500h13v5h-13z" fill="#fff" stroke="#e84848"/><path d="M3 8h10" stroke="#e84848" stroke-width="2"/></symbol>
<symbol id="mouse" viewBox="0 0 24 24"><path d="M2 4q6-4 9 3l9-5M3 10l9-7M7 18l-4-7" fill="none" stroke="#444" stroke-width="1.800"/><ellipse cx="14" cy="15" rx="7" ry="8" fill="none" stroke="#444" stroke-width="1.800" transform="rotate(-25 14 15)"/><path d="M8 13l12-5M12 8l3 9" stroke="#444" stroke-width="1.500"/></symbol>
<symbol id="lock" viewBox="0 0 24 24"><path d="M6 12V7a6 6 0 0 1 12 0v5" fill="none" stroke="#777" stroke-width="2.500"/><rect x="3" y="10" width="18" height="13" rx="2" fill="#555"/></symbol>
<symbol id="crs" viewBox="0 0 24 24"><circle cx="12" cy="12" r="10.500" fill="#777"/><path d="M0 12h24M4 7h16M4 17h16M12 0v24M12 2Q3 12 12 22Q21 12 12 2" fill="none" stroke="#bbb" stroke-width="1"/></symbol>
<symbol id="bub" viewBox="0 0 24 24"><path d="M12 1a10.500 9.500 0 1 0 4 19l4 4v-6A10 9.500 0 0 0 12 1z" fill="#555"/><path d="M6 10.500h3M11 10.500h3M16 10.500h3" stroke="#ccc" stroke-width="2.500"/></symbol>
<symbol id="wfloat" viewBox="0 0 12 12"><rect x=".6" y=".6" width="10.800" height="10.800" rx="1.500" fill="none" stroke="#555"/><path d="M5 3h4v4H5zM3 5h4v4H3z" fill="none" stroke="#555"/></symbol>
<symbol id="wclose" viewBox="0 0 12 12"><rect x=".6" y=".6" width="10.800" height="10.800" rx="1.500" fill="none" stroke="#555"/><path d="M3 3l6 6M9 3L3 9" stroke="#555" stroke-width="2"/></symbol>
</svg>

<div class="window">
  <header class="titlebar"><span class="wtitle">*Untitled Project - QGIS</span><span class="wbtns"><i class="wb">–</i><i class="wb">□</i><i class="wb red">×</i></span></header>
  <nav class="menu">
    <span style="width:62px">Pro<u>j</u>ect</span><span style="width:42px"><u>E</u>dit</span><span style="width:48px"><u>V</u>iew</span><span style="width:51px"><u>L</u>ayer</span><span style="width:71px"><u>S</u>ettings</span><span style="width:64px"><u>P</u>lugins</span><span style="width:59px">Vect<u>o</u>r</span><span style="width:57px"><u>R</u>aster</span><span style="width:78px"><u>D</u>atabase</span><span style="width:46px"><u>W</u>eb</span><span style="width:74px">MMQGIS</span><span style="width:88px">Pro<u>c</u>essing</span><span><u>H</u>elp</span>
  </nav>
  <div class="toolbar">
    <b class="grip first"></b><svg class="t"><use href="#newdoc"/></svg><svg class="t"><use href="#folder"/></svg><svg class="t"><use href="#save"/></svg><svg class="t"><use href="#saveas"/></svg><svg class="t"><use href="#layout"/></svg><svg class="t"><use href="#layouts"/></svg><svg class="t"><use href="#styles"/></svg>
    <b class="grip"></b><span class="pressed"><svg class="t"><use href="#hand"/></svg></span><svg class="t"><use href="#panto"/></svg><svg class="t"><use href="#zin"/></svg><svg class="t"><use href="#zout"/></svg><svg class="t"><use href="#znat"/></svg><svg class="t"><use href="#zfull"/></svg><svg class="t"><use href="#zsel"/></svg><svg class="t"><use href="#zlay"/></svg><svg class="t"><use href="#zlast"/></svg><svg class="t"><use href="#znext"/></svg><svg class="t"><use href="#mapnew"/></svg><svg class="t"><use href="#marknew"/></svg><svg class="t"><use href="#mark"/></svg><svg class="t"><use href="#refresh"/></svg>
    <b class="grip"></b><svg class="t"><use href="#ident"/></svg><svg class="t"><use href="#gearg"/></svg><i class="dd off"></i><svg class="t"><use href="#select"/></svg><i class="dd"></i><svg class="t"><use href="#selform"/></svg><i class="dd"></i><svg class="t"><use href="#desel"/></svg><svg class="t"><use href="#table"/></svg><svg class="t"><use href="#abacus"/></svg><svg class="t"><use href="#gear"/></svg><svg class="t"><use href="#sigma"/></svg><svg class="t"><use href="#ruler"/></svg><i class="dd"></i><svg class="t"><use href="#tipm"/></svg><svg class="t"><use href="#textan"/></svg><i class="dd"></i>
  </div>
  <div class="toolbar">
    <b class="grip first"></b><svg class="t"><use href="#dsm"/></svg><svg class="t"><use href="#gpkgn"/></svg><svg class="t"><use href="#vectn"/></svg><svg class="t"><use href="#feathn"/></svg><svg class="t"><use href="#chip"/></svg>
    <b class="grip"></b><svg class="t"><use href="#pens"/></svg><svg class="t"><use href="#pen"/></svg><svg class="t"><use href="#saveg"/></svg><svg class="t"><use href="#blob"/></svg><svg class="t"><use href="#vtool"/></svg><i class="dd off"></i><svg class="t"><use href="#multi"/></svg><svg class="t"><use href="#trash"/></svg><svg class="t"><use href="#cut"/></svg><svg class="t"><use href="#copy"/></svg><svg class="t"><use href="#paste"/></svg><svg class="t"><use href="#undo"/></svg><svg class="t"><use href="#redo"/></svg>
    <b class="grip"></b><svg class="t"><use href="#abc"/></svg><svg class="t"><use href="#diag"/></svg><svg class="t"><use href="#pinl"/></svg><svg class="t"><use href="#ping"/></svg><svg class="t"><use href="#eyeg"/></svg><svg class="t"><use href="#movg"/></svg><svg class="t"><use href="#rotg"/></svg><svg class="t"><use href="#edg"/></svg>
    <b class="grip"></b><svg class="t"><use href="#gridp"/></svg><svg class="t"><use href="#grids"/></svg><svg class="t"><use href="#meta"/></svg>
    <b class="grip"></b><svg class="t"><use href="#python"/></svg><svg class="t"><use href="#binog"/></svg>
    <b class="grip"></b><svg class="t"><use href="#help"/></svg><b class="grip"></b>
  </div>
  <div class="work">
    <aside class="side">
      <b class="hgrip"></b>
      <div><svg><use href="#vectp"/></svg></div><div><svg><use href="#raster"/></svg></div><div><svg><use href="#comma"/></svg></div><div><svg><use href="#feathp"/></svg></div><div><svg><use href="#virt"/></svg></div><div><svg><use href="#pgp"/></svg><i class="dd"></i></div><div><svg><use href="#globep"/></svg><i class="dd"></i></div><div><svg><use href="#wcsp"/></svg></div><div><svg><use href="#wfsp"/></svg><i class="dd"></i></div><div><svg><use href="#vectn"/></svg><i class="dd"></i></div>
    </aside>
    <section class="docks">
      <div class="dockhead"><span>Browser</span><svg><use href="#wfloat"/></svg><svg><use href="#wclose"/></svg></div>
      <div class="docktools"><svg><use href="#addsq"/></svg><svg><use href="#refresh"/></svg><svg><use href="#filter"/></svg><svg><use href="#collapse"/></svg><svg><use href="#info"/></svg></div>
      <div class="tree browser">
        <ul>
          <li><i></i><svg><use href="#fav"/></svg>Favorites</li>
          <li><i class="ex"></i><svg><use href="#home"/></svg>Home</li>
          <li><i class="ex"></i><svg><use href="#dir"/></svg>/</li>
          <li><i></i><svg><use href="#gpkg"/></svg>GeoPackage</li>
          <li><i></i><svg><use href="#feather"/></svg>SpatiaLite</li>
          <li><i></i><svg><use href="#pg"/></svg>PostGIS</li>
          <li><i></i><svg><use href="#mssql"/></svg>MSSQL</li>
          <li><i></i><svg><use href="#db2"/></svg>DB2</li>
          <li><i></i><svg><use href="#globe"/></svg>WMS/WMTS</li>
          <li><i class="ex"></i><svg><use href="#globe"/></svg>XYZ Tiles</li>
          <li><i></i><svg><use href="#wcs"/></svg>WCS</li>
          <li><i></i><svg><use href="#wfs"/></svg>WFS</li>
          <li><i></i><svg><use href="#ows"/></svg>OWS</li>
          <li><i></i><svg><use href="#arc"/></svg>ArcGisMapServer</li>
          <li><i></i><svg><use href="#globe"/></svg>ArcGisFeatureServer</li>
        </ul>
        <div class="sb"><i class="up"></i><b class="thumb"></b><b class="groove"></b><i class="down"></i></div>
      </div>
      <div class="split"><b class="hgrip"></b></div>
      <div class="dockhead"><span>Layers</span><svg><use href="#wfloat"/></svg><svg><use href="#wclose"/></svg></div>
      <div class="docktools lt"><svg><use href="#brushs"/></svg><svg><use href="#group"/></svg><svg><use href="#eye"/></svg><svg><use href="#filter"/></svg><svg><use href="#epsf"/></svg><i class="dd"></i><svg><use href="#expand"/></svg><svg><use href="#collapse"/></svg><svg><use href="#remsq"/></svg></div>
      <div class="tree layers">
        <ul>
          <li><i></i><svg><use href="#tbl"/></svg>fayette_block_occupancy</li>
          <li class="sel"><i></i><svg class="ck"><use href="#chk"/></svg><b class="sw"></b><span>tl_2010_21067_tabblock10</span></li>
        </ul>
      </div>
    </section>
    <main class="canvas">
      <svg viewBox="349 124 1566 918" preserveAspectRatio="none">
        <g transform="translate(1080 130) scale(.333333 .580357)" fill="#e66f8c" stroke="#2c2426" stroke-width="1.300" stroke-linejoin="round">
          <g class="ns">
          <path d="M0 175L50 165L655 42L656 52L668 48L690 50L705 44L730 38L755 32L795 33L820 27L838 32L840 40L862 43L848 52L850 62L866 68L870 73L897 74L905 80L905 90L965 94L967 108L962 120L972 128L955 134L955 142L970 148L968 156L1020 172L1020 500L1326 550L1330 544L1340 551L1350 544L1362 551L1372 550L1388 561L1398 570L1410 566L1432 565L1435 572L1433 577L1448 578L1455 585L1475 586L1473 597L1485 600L1485 606L1498 609L1490 620L1497 626L1500 632L1492 640L1498 650L1493 656L1502 660L1495 668L1480 673L1488 682L1496 692L1490 700L1493 710L1486 712L1488 722L1496 728L1494 738L1475 747L1450 748L1438 758L1450 764L1457 770L1450 774L1475 790L1463 798L1472 805L1495 808L1497 816L1508 820L1300 872L1100 1200L1075 1236L1088 1241L1102 1239L1098 1247L1065 1245L1040 1248L1048 1253L1070 1251L1085 1256L1080 1266L1087 1275L1106 1280L1080 1284L1082 1292L1057 1298L1055 1310L1030 1316L1045 1326L1062 1326L1062 1320L1078 1322L1085 1338L1117 1343Q1110 1375 1098 1380Q1072 1392 1045 1380L1020 1362L960 1342L915 1320C875 1307 850 1300 825 1302C790 1305 774 1325 788 1340L812 1352L820 1365L850 1393L880 1430L905 1458Q918 1475 907 1487Q895 1499 870 1501L830 1507L790 1526C770 1537 735 1536 715 1525L690 1500L635 1468C625 1440 605 1425 565 1424C525 1424 515 1435 495 1455L465 1498L412 1526L397 1522L415 1510L410 1500L420 1495L412 1480L400 1465L405 1452L432 1443L410 1432L392 1418L375 1402L355 1390L365 1378L362 1364L335 1350L322 1335L295 1290L290 1272L220 1250L160 1210z"/>
          <g fill="none">
          <path d="M526 68L590 82L683 93M725 42L690 90L660 120L645 146M690 85L740 88L905 90L960 93M905 82L800 166M386 97L388 105L410 115L415 120L435 131L475 132L500 144L520 142L540 145L555 136L565 145L615 148L645 146M683 98L700 96L715 88M700 96L703 106L670 125L665 135L645 150L600 166M663 120L700 130L750 150L810 165M540 142L580 152L610 165M545 146L600 155L640 166M210 167L300 116L320 111M70 160L95 164"/>
          <path d="M1300 590L1326 586L1345 582L1388 562M1300 606L1326 614L1400 637L1488 672M1300 782L1326 778L1400 770L1455 772"/>
          <path d="M1300 722L1326 728L1400 737L1475 745" stroke-width="3"/>
          <path d="M555 1228L497 1282L410 1348L382 1342L370 1332M322 1335L340 1324L385 1332L430 1342M362 1366L385 1352L420 1346M497 1282L530 1294L536 1320L525 1335L525 1346L507 1350L480 1375L430 1392L392 1418M600 1228L617 1238L622 1256L640 1264L660 1275L663 1288L688 1296L690 1312L720 1318L784 1338M830 1228L850 1245L852 1252L870 1268L875 1280L890 1290L935 1304L915 1318M900 1230L960 1268L1000 1300L1025 1325L1022 1345L995 1328M920 1232L980 1235L990 1230M990 1232L978 1260L960 1268M1020 1345L1095 1375L1112 1342M1020 1350L1075 1360M1095 1375L1105 1350M1040 1356L1065 1353"/>
          <path d="M900 1230L940 1262L965 1280L1000 1328L1022 1350" stroke-width="3"/>
          <path d="M1045 1380L1020 1362L960 1342L915 1320C875 1307 850 1300 825 1302C790 1305 774 1325 788 1340L812 1352L820 1365L850 1393L880 1430L905 1458Q918 1475 907 1487Q895 1499 870 1501L830 1507L790 1526C770 1537 735 1536 715 1525L690 1500L635 1468C625 1440 605 1425 565 1424C525 1424 515 1435 495 1455L465 1498L412 1526M1040 1248L1098 1247M1030 1316L1062 1326M1078 1322L1085 1338L1117 1343Q1110 1375 1098 1380Q1072 1392 1045 1380" stroke-width="2.300"/>
          </g></g>
        </g>
      </svg>
    </main>
  </div>
  <footer class="status">
    <div class="inp loc"><svg><use href="#mag"/></svg>Type to locate (Ctrl+K)</div>
    <span class="msg">1 legend entries removed.</span>
    <span class="l1">Coordinate</span><div class="inp s1">-84.7935,38.0474</div>
    <svg class="mo"><use href="#mouse"/></svg>
    <span class="l2">Scale</span><div class="inp combo s2">1:101359<b><i class="dn"></i></b></div>
    <svg class="lk"><use href="#lock"/></svg>
    <span class="l3">Magnifier</span><div class="inp combo s3">100%<b class="sp"><i class="un"></i><i class="dn"></i></b></div>
    <span class="l4">Rotation</span><div class="inp combo s4">0.0 °<b class="sp"><i class="un"></i><i class="dn"></i></b></div>
    <svg class="ck"><use href="#chk"/></svg><span class="l5">Render</span>
    <svg class="cr"><use href="#crs"/></svg><span class="l6">EPSG:4269</span><svg class="bb"><use href="#bub"/></svg>
  </footer>
</div>

<div class="dialog">
  <header class="dtitle"><span>Layer Properties - tl_2010_21067_tabblock10 | Symbology</span><i>×</i></header>
  <div class="dbody">
    <div class="nav">
      <div class="search"><svg><use href="#mag"/></svg></div>
      <div class="navrow">
        <ul>
          <li><svg><use href="#info"/></svg>Information</li>
          <li><svg><use href="#src"/></svg>Source</li>
          <li class="on"><svg><use href="#brush"/></svg>Symbology</li>
          <li><svg><use href="#abcl"/></svg>Labels</li>
          <li><svg><use href="#diag"/></svg>Diagrams</li>
          <li><svg><use href="#cube"/></svg>3D View</li>
          <li><svg><use href="#fields"/></svg>Source Fields</li>
          <li><svg><use href="#attr"/></svg>Attributes Form</li>
          <li><svg><use href="#join"/></svg>Joins</li>
          <li><svg><use href="#aux"/></svg>Auxiliary Storage</li>
          <li><svg><use href="#acts"/></svg>Actions</li>
          <li><svg><use href="#tip"/></svg>Display</li>
          <li><svg><use href="#rend"/></svg>Rendering</li>
          <li><svg><use href="#eps"/></svg>Variables</li>
          <li><svg><use href="#metad"/></svg>Metadata</li>
          <li><svg><use href="#deps"/></svg>Dependencies</li>
        </ul>
        <div class="sb"><i class="up"></i><b class="thumb"></b><b class="groove"></b><i class="down"></i></div>
      </div>
    </div>
    <div class="form">
      <div class="btn cb"><svg class="i14"><use href="#grad"/></svg>Graduated<i class="dn"></i></div>
      <div class="row"><label>Column</label><div class="field col"><em>123</em>fayette_block_occupancy_Vacant<b><i class="dn"></i></b></div><div class="btn ep"><svg class="i14"><use href="#eps"/></svg></div></div>
      <div class="row"><label>Symbol</label><div class="btn grow"><b class="swatch"></b>Change...</div></div>
      <div class="row"><label>Legend format</label><div class="field fmt">%1 - %2</div><div class="field prec">Precision 0<b class="sp"><i class="un"></i><i class="dn"></i></b></div><svg class="ck"><use href="#unchk"/></svg><span class="trim">Trim</span></div>
      <div class="row"><label>Method</label><div class="btn cb grow">Color<i class="dn"></i></div></div>
      <div class="row ramprow"><label>Color ramp</label><div class="btn ramp"><b></b></div><div class="btn rdd"><i class="dn"></i></div></div>
      <div class="tabs"><span class="tab act">Classes</span><span class="tab">Histogram</span></div>
      <div class="classes">
        <div class="th"><span>Symbol<i class="un"></i></span><span>Values</span><span>Legend</span></div>
        <div class="tr"><svg class="ck"><use href="#chk"/></svg><b style="background:#fff"></b><span>0.00 - 27.20</span><span>0 - 27</span></div>
        <div class="tr"><svg class="ck"><use href="#chk"/></svg><b style="background:#ffbfbf"></b><span>27.20 - 54.40</span><span>27 - 54</span></div>
        <div class="tr"><svg class="ck"><use href="#chk"/></svg><b style="background:#ff8080"></b><span>54.40 - 81.60</span><span>54 - 82</span></div>
        <div class="tr"><svg class="ck"><use href="#chk"/></svg><b style="background:#ff4040"></b><span>81.60 - 108.80</span><span>82 - 109</span></div>
        <div class="tr"><svg class="ck"><use href="#chk"/></svg><b style="background:#f00"></b><span>108.80 - 136.00</span><span>109 - 136</span></div>
      </div>
      <div class="row mode"><span>Mode</span><div class="btn cb modecb">Equal Interval<i class="dn"></i></div><span class="push">Classes</span><div class="field num">5<b class="sp"><i class="un"></i><i class="dn"></i></b></div></div>
      <div class="sym"><b class="box"><i class="ex"></i></b><svg class="ck"><use href="#unchk"/></svg><strong>Symmetric Classification</strong></div>
      <div class="row acts"><div class="btn w80">Classify</div><div class="btn w28"><svg class="i16"><use href="#plusg"/></svg></div><div class="btn w28"><svg class="i16"><use href="#minusr"/></svg></div><div class="btn w80">Delete All</div><div class="btn adv push">Advanced<i class="dn sm"></i></div></div>
      <div class="link"><svg class="ck"><use href="#chk"/></svg>Link class boundaries</div>
      <div class="lr"><i class="ex"></i><strong>Layer Rendering</strong></div>
      <div class="row acts foot"><div class="btn w80"><svg class="i16"><use href="#helpc"/></svg>Help</div><div class="btn w80 style">Style<i class="dn sm"></i></div><div class="btn w80 push"><svg class="i16"><use href="#okc"/></svg>Apply</div><div class="btn w80"><svg class="i12"><use href="#xc"/></svg><span><u>C</u>ancel</span></div><div class="btn w80 ok"><svg class="i16"><use href="#okc"/></svg><span><u>O</u>K</span></div></div>
    </div>
  </div>
</div>
</body>
</html>
```
FILE: styles.css
```css
*{box-sizing:border-box}
body{margin:0;width:1916px;height:1074px;overflow:hidden;position:relative;background:#a8a4a0;font:14.4px/18px "Noto Sans","Open Sans",sans-serif;color:#000}
svg{display:block;flex:none;overflow:visible}
.defs{position:absolute}
.sprites{display:none}
svg text{font-family:"Noto Sans",sans-serif}
ul{list-style:none;margin:0;padding:0}
i,em{font-style:normal}
u{text-decoration-thickness:1.5px;text-underline-offset:3px;text-decoration-skip-ink:none}

/* main window, greyed out behind the modal dialog */
.window{width:1916px;height:1074px;display:flex;flex-direction:column;background:#f0ebe6;filter:brightness(.7)}
.titlebar{height:23px;background:linear-gradient(#3c3b37,#4a4843);display:grid;grid-template-columns:68px 1fr 72px;align-items:start;color:#dfdbd2;font-weight:700;font-size:13.8px;flex:none}
.wtitle{grid-column:2;text-align:center;line-height:18px;letter-spacing:.33px}
.wbtns{display:flex;gap:4px;padding-top:1px;justify-content:flex-end;padding-right:5px}
.wb{width:16px;height:16px;border-radius:50%;background:#7d7a72;color:#333;font-size:11px;line-height:14px;text-align:center;border:1px solid #34322e}
.wb.red{background:#f0602c}
.menu{height:22px;display:flex;padding-left:6.5px;align-items:center;border-bottom:1px solid #c8c4c0;background:#f0ebe6;white-space:nowrap;line-height:21px;flex:none}
.toolbar{height:39px;border-bottom:1px solid #aaa6a2;box-shadow:inset 0 1px #f8f6f4;display:flex;align-items:center;background:linear-gradient(#f7f4f1,#ebe6e1);flex:none}
.toolbar .t{width:24px;height:24px;margin:0 4.5px}
.pressed{width:33px;height:31px;display:flex;align-items:center;border:1px solid #a5a19d;border-radius:3px;background:#e2dfdc}
.pressed .t{margin:0 3.5px}
.grip{width:16px;height:20px;flex:none;background:radial-gradient(circle at 1px 1px,#9e9a96 .8px,transparent 1px) 6px 0/3px 3px repeat-y}
.grip.first{width:8.5px;background-position:1px 0}
.dd{width:12px;flex:none;height:6px;background:#333;clip-path:polygon(8% 0,84% 0,46% 100%)}
.dd.off{background:#aaa}
.work{display:flex;height:920px;flex:none}
.side{width:47px;padding-top:8px;background:linear-gradient(90deg,#f4f1ee,#eae5e0);flex:none}
.hgrip{display:block;width:18px;height:5px;margin:0 auto;background:radial-gradient(circle at 1px 1px,#9e9a96 .8px,transparent 1px) 0 0/3px 3px}
.side .hgrip{margin-left:14px;margin-bottom:-1px}
.side div{height:32px;display:flex;align-items:center;padding-left:4px}
.side svg{width:24px;height:24px}
.side .dd{margin-left:3px}
.docks{width:301px;border-left:1px solid #aaa6a2;flex:none;padding:1px 6px 0 0;display:flex;flex-direction:column}
.dockhead{height:18px;display:flex;align-items:center;padding-left:5px;gap:2px}
.dockhead span{flex:1}
.dockhead svg{width:12px;height:12px}
.dockhead svg:last-child{margin-right:1px}
.docktools{height:31px;display:flex;gap:9px;align-items:center;padding-left:8px}
.docktools svg{width:16px;height:16px}
.tree{border:1px solid #aaa6a2;background:#fff;overflow:hidden;display:flex}
.tree ul{flex:1;overflow:hidden}
.tree li{height:19px;display:flex;align-items:center;line-height:19px;white-space:nowrap}
.tree li>i{width:23px;height:10px;flex:none}
.ex::before{content:"";display:block;width:6px;height:10px;background:#333;clip-path:polygon(0 0,100% 50%,0 100%)}
.tree li>.ex{padding-left:7px}
.tree li>svg{width:16px;height:16px;margin-right:6px}
.browser{height:273px}
.sb{width:14px;flex:none;display:flex;flex-direction:column;border-left:1px solid #bbb7b3;background:#f6f4f2}
.sb i{height:14px;flex:none;display:grid;place-items:center}
.sb .up{border-bottom:1px solid #bbb7b3}
.sb .down{border-top:1px solid #bbb7b3}
.sb i::before{content:"";width:8px;height:5px;background:#555;clip-path:polygon(0 100%,50% 0,100% 100%)}
.sb .down::before{clip-path:polygon(0 0,100% 0,50% 100%)}
.thumb{flex:1}
.groove{height:31px;background:#dedbd8;border-top:1px solid #bbb7b3}
.split{height:7px}
.docktools.lt .dd{margin:0 -5px 0 -6px}
.layers{flex:1;font-weight:700}
.layers li{letter-spacing:.12px}
.layers .sel{background:#3491cc;color:#e8eef5;height:19px;letter-spacing:.36px}
.layers li>.ck{width:14px;height:14px;margin-right:6px}
.sw{width:16px;height:16px;background:#bd88b5;border:1px solid #776;margin-right:6px}
.sel span{border-bottom:1px solid #e8eef5;line-height:17px}
.canvas{flex:1;border:1px solid #aaa6a2;background:#fff;overflow:hidden}
.canvas svg{width:1566px;height:918px}
.ns path{vector-effect:non-scaling-stroke}
.status{flex:1;display:flex;align-items:center;padding-top:2px;font-size:12.4px;white-space:nowrap}
.inp{height:24px;border:1px solid #aaa49e;border-radius:3px;background:#fff;display:flex;align-items:center;padding-left:4px;flex:none}
.loc{width:273px;font-size:14.5px;color:#777;padding-left:8px;height:25px}
.loc svg{width:13px;height:13px;margin-right:7px}
.msg{margin-left:9px;width:754px;letter-spacing:-.45px}
.l1{width:64px;letter-spacing:-.2px}
.s1{width:104px;letter-spacing:-.25px}
.mo{width:16px;height:16px;margin:0 14px 0 3px}
.l2{width:32px}.s2{width:97px}
.lk{width:14px;height:15px;margin:0 8px 0 11px}
.l3{width:56px;letter-spacing:-.2px}.s3{width:98px}
.l4{margin-left:8px;width:58px}.s4{width:94px}
.status .ck{width:14px;height:14px;margin:0 5px 0 6px}
.l5{width:57px}.cr{width:16px;height:16px;margin-right:4px}
.l6{width:78px;letter-spacing:-.3px}.bb{width:16px;height:16px}
.combo,.field{justify-content:flex-start}
.combo>b,.field>b{margin-left:auto;height:100%;width:20px;border-left:1px solid #b8b3ae;display:flex;align-items:center;justify-content:center;background:linear-gradient(#fdfdfc,#eeebe8)}
.combo>.sp,.field>.sp{width:15px;flex-direction:column;gap:4px}
.dn,.un{width:8px;height:5px;background:#555;clip-path:polygon(0 0,100% 0,50% 100%);flex:none}
.un{clip-path:polygon(0 100%,50% 0,100% 100%)}
.dn.sm{width:7px;height:4px}

/* layer properties dialog */
.dialog{position:absolute;left:391px;top:226px;width:1131px;height:618px;background:#efebe7;border-radius:6px 6px 0 0;overflow:hidden}
.dtitle{height:30px;background:linear-gradient(#5c5a50,#3e3d38);color:#dfdbd2;font-weight:700;font-size:13.8px;letter-spacing:.3px;display:flex;align-items:center;justify-content:center;border-top:1px solid #6b7058;padding-bottom:2px;position:relative}
.dtitle i{position:absolute;right:6px;top:6px;width:16px;height:16px;border-radius:50%;background:radial-gradient(circle at 50% 30%,#f78058,#e0501c);border:1px solid #3a2a20;color:#4a2010;font-size:14px;line-height:13px;text-align:center;letter-spacing:0}
.dbody{display:flex;height:588px}
.nav{width:201px;background:#5c5c5c;flex:none;display:flex;flex-direction:column}
.search{height:25px;background:#fff;border:1px solid #b8b4b0;border-radius:2px;padding:5px 7px}
.search svg{width:13px;height:13px}
.navrow{flex:1;display:flex;margin-top:6px;overflow:hidden;height:557px}
.nav ul{flex:1}
.nav li{height:36px;display:flex;align-items:center;color:#f4f4f4;padding:1px 0 0 5px;gap:8px;white-space:nowrap}
.nav li svg{width:24px;height:24px}
.nav .on{background:#efebe7;color:#000;gap:9px;padding-left:7px}
.nav .groove{height:112px}
.form{flex:1;padding:3px 3px 0 4px;display:flex;flex-direction:column;white-space:nowrap}
.btn{height:25px;border:1px solid #b0aaa4;border-radius:3px;background:linear-gradient(#fff,#edebe9);display:flex;align-items:center;justify-content:center;flex:none}
.cb{justify-content:flex-start;padding:0 6px 0 4px}
.cb .dn{margin-left:auto}
.row{display:flex;height:25px;margin-top:6px;align-items:center;flex:none}
.row label{width:108px;flex:none}
.row .grow{flex:1}
.i12{width:12px;height:12px;margin-right:3px}
.i14{width:14px;height:14px;margin:0 4px 0 2px}
.i16{width:16px;height:16px}
.field{height:25px;background:#fff;border:1px solid #b0aaa4;border-radius:3px;display:flex;align-items:center;padding-left:6px;flex:1}
.field em{font-size:9.8px;font-weight:700;color:#555;width:17px;margin:0 3px 0 -3px;letter-spacing:0}
.col{letter-spacing:.22px}
.ep{width:24px;margin-left:6px}
.ep .i14{margin:0}
.swatch{width:16px;height:16px;background:#e8708c;border:1px solid #833;margin-right:1px}
.fmt{flex:none;width:637px}
.prec{flex:none;width:110px;height:23px;margin-left:6px;padding-left:4px}
.ck{width:14px;height:14px}
.row>.ck{margin:0 6px}
.ramprow{height:28px}
.ramp{height:28px;width:803px;padding:0 4px}
.ramp b{flex:1;height:16px;background:linear-gradient(90deg,#fff,#f00)}
.rdd{height:28px;width:12px}
.tabs{height:28px;margin-top:6px;display:flex;align-items:flex-end;border-bottom:1px solid #b8b3ae;box-shadow:0 1px #fff;flex:none}
.tab{height:26px;width:94px;text-align:center;line-height:26px;border:1px solid #b8b3ae;border-left:0;background:#e8e4e1;margin-bottom:-1px}
.act{width:75px;height:28px;line-height:28px;background:#fbfaf9;border-left:1px solid #b8b3ae;border-bottom-color:#fbfaf9;border-radius:3px 3px 0 0}
.classes{height:176px;margin-top:10px;border:1px solid #b0aaa4;background:#fff;flex:none}
.th{height:21px;display:flex;border-bottom:1px solid #b8b3ae;background:linear-gradient(#fbfaf9,#eeebe8)}
.th span{display:flex;align-items:center;padding:1px 0 0 2px;border-right:1px solid #c8c4c0;width:110px}
.th span:first-child{width:80px;justify-content:space-between;padding-right:5px}
.th span:last-child{border:0}
.th .un{height:4px}
.tr{height:18px;display:flex;align-items:center;padding-left:3px}
.tr b{width:16px;height:16px;border:1px solid #00000080;margin:0 44px 0 6px}
.tr span{width:113.500px}
.modecb{width:186px;margin-left:7px}
.push{margin-left:auto}
.num{flex:none;width:53px;height:23px;margin-left:6px;padding-left:5px}
.sym{height:16px;margin-top:8px;display:flex;align-items:center;gap:4px;color:#444;flex:none}
.box{width:16px;height:16px;border:1px solid #3388c0;display:grid;place-items:center}
.sym strong{margin-left:4px}
.sym .ex::before,.lr .ex::before{width:7px;height:11px}
.acts{gap:6px}
.w80{width:80px}.w28{width:28px}
.adv{width:87px;gap:6px;padding-right:1px}
.link{height:14px;margin-top:10px;display:flex;align-items:center;gap:5px;line-height:20px;flex:none}
.lr{height:16px;margin-top:22px;display:flex;align-items:center;color:#444;padding-left:5px;gap:10px;flex:none}
.w80 .i16{margin-left:-2px}
.style{gap:20px;padding-left:14px}
.ok{border-color:#2a76a8;background:linear-gradient(#fff,#dbe3e8)}
```
